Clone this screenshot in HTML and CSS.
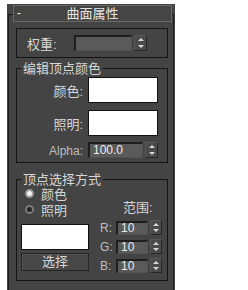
FILE: index.html
```html
<!DOCTYPE html>
<html>
<head>
  <meta charset="utf-8">
  <title>曲面属性</title>
  <link rel="stylesheet" href="styles.css">
</head>
<body>
  <div class="panel">
    <div class="rollout">
      <div class="rollout-title">
        <span class="toggle">-</span>
        <span class="title">曲面属性</span>
      </div>

      <div class="group weight">
        <span class="label">权重:</span>
        <div class="field w58"></div>
        <div class="arrows"><i class="up"></i><i class="down"></i></div>
      </div>

      <div class="group colors">
        <span class="legend">编辑顶点颜色</span>
        <div class="rows">
          <span class="label">颜色:</span>
          <div class="swatch"></div>
          <span class="label">照明:</span>
          <div class="swatch"></div>
          <span class="label latin">Alpha:</span>
          <div class="spin alpha">
            <div class="field w56">100.0</div>
            <div class="arrows"><i class="up"></i><i class="down"></i></div>
          </div>
        </div>
      </div>

      <div class="group select">
        <span class="legend">顶点选择方式</span>
        <div class="select-body">
          <div class="left">
            <div class="radio on"><span class="dot"></span>颜色</div>
            <div class="radio"><span class="dot"></span>照明</div>
            <div class="swatch small"></div>
            <div class="button">选择</div>
          </div>
          <div class="right">
            <div class="range-title">范围:</div>
            <div class="rgb">
              <span class="latin">R:</span>
              <div class="field w32">10</div>
              <div class="arrows small"><i class="up"></i><i class="down"></i></div>
            </div>
            <div class="rgb">
              <span class="latin">G:</span>
              <div class="field w32">10</div>
              <div class="arrows small"><i class="up"></i><i class="down"></i></div>
            </div>
            <div class="rgb">
              <span class="latin">B:</span>
              <div class="field w32">10</div>
              <div class="arrows small"><i class="up"></i><i class="down"></i></div>
            </div>
          </div>
        </div>
      </div>
    </div>
  </div>
</body>
</html>
```

FILE: styles.css
```css
* {
  box-sizing: border-box;
}

body {
  margin: 0;
  background: #fff;
  font-family: "Liberation Sans", "Noto Sans CJK SC", sans-serif;
  font-size: 12px;
  color: #d6d6d6;
}

.panel {
  margin: 4px 0 0 7px;
  width: 168px;
  height: 286px;
  padding: 10px 1px 0 1px;
  background: #444;
}

.rollout {
  width: 166px;
  border: 1px solid #1b1b1b;
}

.rollout-title {
  display: grid;
  grid-template-columns: 1fr auto 1fr;
  margin: -10px 1px 0 4px;
  height: 17px;
  padding: 0 3px;
  border: 1px solid #686868;
  background: #454545;
  line-height: 15px;
}

.rollout-title .title {
  font-size: 13px;
  color: #e4e4e4;
}

.toggle {
  color: #e4e4e4;
}

/* group boxes */
.group {
  width: 152px;
  margin: 10px 5px 0 7px;
  border: 1px solid #141414;
}

.legend {
  display: block;
  width: fit-content;
  margin: -8px 0 0 4px;
  padding: 0 2px;
  background: #444;
  line-height: 16px;
  font-size: 13px;
}

.weight {
  display: flex;
  align-items: center;
  height: 30px;
  margin-top: 6px;
  padding-left: 10px;
}

.weight .label {
  width: 47px;
  font-size: 13px;
}

.colors {
  padding-bottom: 4px;
}

.rows {
  display: grid;
  grid-template-columns: 66px 70px;
  column-gap: 5px;
  row-gap: 7px;
  align-items: center;
}

.rows .label {
  text-align: right;
  font-size: 13px;
}

.rows .spin {
  margin-top: -1px;
}

.latin {
  font-size: 12px;
  color: #bdbdbd;
}

.rows .label.latin {
  font-size: 12px;
}

.swatch {
  height: 26px;
  background: #fff;
  border: 1px solid #111;
}

/* spinner parts */
.spin,
.rgb {
  display: flex;
  align-items: center;
}

.field {
  height: 16px;
  margin-right: 2px;
  padding-left: 3px;
  background: #5a5a5a;
  border-top: 2px solid #1e1e1e;
  border-left: 2px solid #1e1e1e;
  border-right: 1px solid #525252;
  border-bottom: 1px solid #525252;
  line-height: 13px;
  color: #ececec;
}

.w58 { width: 58px; }
.w56 { width: 56px; }
.w32 { width: 32px; height: 14px; line-height: 11px; }

.arrows {
  display: flex;
  flex-direction: column;
  justify-content: space-around;
  align-items: center;
  width: 13px;
  height: 16px;
  background: #4a4a4a;
  border: 1px solid #262626;
  border-top-color: #585858;
  border-left-color: #585858;
}

.arrows.small {
  width: 12px;
  height: 15px;
}

.arrows i {
  display: block;
  width: 0;
  height: 0;
  border-left: 3px solid transparent;
  border-right: 3px solid transparent;
}

.arrows .up {
  border-bottom: 3px solid #d8d8d8;
}

.arrows .down {
  border-top: 3px solid #d8d8d8;
}

/* selection group */
.select {
  margin-top: 16px;
  margin-bottom: 9px;
  padding-bottom: 7px;
}

.select .legend {
  margin-bottom: -3px;
}

.select-body {
  display: flex;
  gap: 11px;
  padding-left: 4px;
}

.left {
  width: 68px;
}

.radio {
  display: flex;
  align-items: center;
  height: 16px;
  font-size: 13px;
}

.dot {
  width: 9px;
  height: 9px;
  margin: 0 7px 0 4px;
  border-radius: 50%;
  background: #262626;
  border: 2px solid #7a7a7a;
}

.radio.on .dot {
  background: #f4f4f4;
  border-color: #9a9a9a;
}

.swatch.small {
  margin-top: 7px;
}

.button {
  height: 18px;
  margin-top: 3px;
  border: 1px solid #262626;
  box-shadow: inset 1px 1px #535353;
  background: #474747;
  text-align: center;
  line-height: 16px;
  font-size: 13px;
}

.range-title {
  margin: 15px 0 0 23px;
  line-height: 16px;
  font-size: 13px;
}

.rgb {
  margin-top: 4px;
}

.rgb .latin {
  width: 16px;
}
```
